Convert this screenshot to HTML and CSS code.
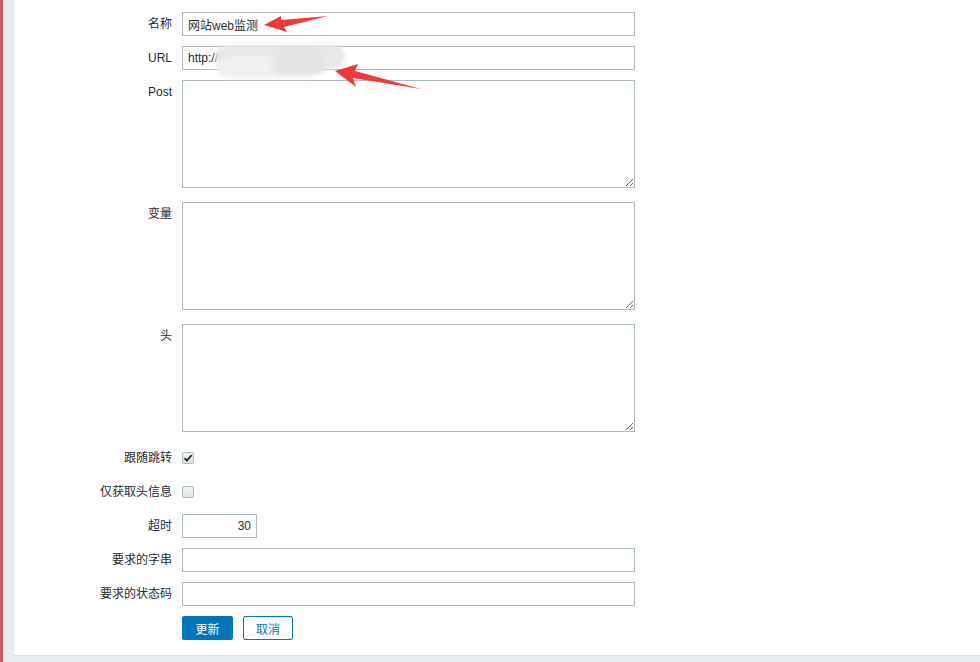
FILE: index.html
```html
<!DOCTYPE html>
<html lang="zh">
<head>
<meta charset="utf-8">
<title>Web</title>
<link rel="stylesheet" href="styles.css">
</head>
<body>
<div class="frame">
  <div class="panel">
    <form class="form">
      <label class="lbl">名称</label>
      <div class="field"><input class="inp" type="text" value="网站web监测"></div>

      <label class="lbl">URL</label>
      <div class="field"><input class="inp" type="text" value="http://example-host.local"></div>

      <label class="lbl">Post</label>
      <div class="field"><textarea class="ta"></textarea></div>

      <label class="lbl">变量</label>
      <div class="field"><textarea class="ta"></textarea></div>

      <label class="lbl">头</label>
      <div class="field"><textarea class="ta"></textarea></div>

      <label class="lbl">跟随跳转</label>
      <div class="field"><span class="cb checked"><svg width="10" height="10" viewBox="0 0 10 10"><path d="M1.5 5.2 L3.8 7.6 L8.6 2.2" fill="none" stroke="#2b2b2b" stroke-width="1.8"/></svg></span></div>

      <label class="lbl">仅获取头信息</label>
      <div class="field"><span class="cb"></span></div>

      <label class="lbl">超时</label>
      <div class="field"><input class="inp short" type="text" value="30"></div>

      <label class="lbl">要求的字串</label>
      <div class="field"><input class="inp" type="text" value=""></div>

      <label class="lbl">要求的状态码</label>
      <div class="field"><input class="inp" type="text" value=""></div>

      <span></span>
      <div class="field buttons">
        <button type="button" class="btn primary">更新</button>
        <button type="button" class="btn secondary">取消</button>
      </div>
    </form>

    <div class="mask">
      <div class="blob b1"></div>
      <div class="blob b2"></div>
      <div class="blob b3"></div>
    </div>

    <svg class="arrows" width="980" height="662" viewBox="0 0 980 662">
      <polygon points="264,25 281,16 281,20 328,16 284,27 287,32" fill="#f03a3a"/>
      <polygon points="335,71 358,64 355,71 421,89 353,78 356,87" fill="#f03a3a"/>
    </svg>
  </div>
</div>
</body>
</html>
```

FILE: styles.css
```css
html, body {
  margin: 0;
  padding: 0;
}
body {
  width: 980px;
  height: 662px;
  overflow: hidden;
  background: #e8ecef;
  font-family: "Liberation Sans", Arial, "Noto Sans CJK SC", sans-serif;
  font-size: 12px;
  color: #1f2c33;
}
.frame {
  height: 662px;
  border-left: 3px solid #c1605e;
  padding-left: 10px;
  box-sizing: border-box;
}
.panel {
  position: relative;
  height: 656px;
  background: #ffffff;
  border-left: 1px solid #dfe4e7;
  border-bottom: 1px solid #dfe4e7;
  box-sizing: border-box;
  padding-top: 12px;
}
.form {
  display: grid;
  grid-template-columns: 158px 453px;
  column-gap: 10px;
  row-gap: 10px;
  align-items: start;
}
.lbl {
  text-align: right;
  line-height: 24px;
  white-space: nowrap;
}
.field {
  display: flex;
  align-items: center;
  min-height: 24px;
}
.inp {
  box-sizing: border-box;
  width: 453px;
  height: 24px;
  margin: 0;
  padding: 0 5px;
  border: 1px solid #acbbc2;
  border-radius: 0;
  background: #fff;
  font-family: inherit;
  font-size: 12px;
  color: #1f2c33;
  outline: none;
}
.inp.short {
  width: 75px;
  text-align: right;
}
.ta {
  box-sizing: border-box;
  display: block;
  width: 453px;
  height: 108px;
  margin: 0 0 4px 0;
  padding: 4px 5px;
  border: 1px solid #acbbc2;
  border-radius: 0;
  background: #fff;
  font-family: inherit;
  font-size: 12px;
  outline: none;
}
.cb {
  box-sizing: border-box;
  width: 12px;
  height: 12px;
  border: 1px solid #acbbc2;
  border-radius: 2px;
  background: linear-gradient(#f4f6f7, #dfe3e6);
  display: flex;
  align-items: center;
  justify-content: center;
}
.buttons {
  gap: 10px;
}
.btn {
  box-sizing: border-box;
  height: 24px;
  margin: 0;
  padding: 0;
  border-radius: 2px;
  font-family: inherit;
  font-size: 12px;
  cursor: pointer;
}
.btn.primary {
  width: 51px;
  background: #0275b8;
  border: 1px solid #0275b8;
  color: #ffffff;
}
.btn.secondary {
  width: 50px;
  background: #ffffff;
  border: 1px solid #0275b8;
  color: #0275b8;
}
.mask {
  position: absolute;
  left: 199px;
  top: 44px;
  width: 136px;
  height: 38px;
}
.blob {
  position: absolute;
  filter: blur(2px);
}
.b1 {
  left: 2px;
  top: 1px;
  width: 130px;
  height: 24px;
  border-radius: 12px;
  background: #e7e8ea;
}
.b2 {
  left: 4px;
  top: 12px;
  width: 100px;
  height: 22px;
  border-radius: 11px;
  background: #eef0f2;
}
.b3 {
  left: 60px;
  top: 4px;
  width: 52px;
  height: 26px;
  border-radius: 6px;
  background: #e2e4e6;
}
.arrows {
  position: absolute;
  left: -14px;
  top: 0;
  pointer-events: none;
}
```
